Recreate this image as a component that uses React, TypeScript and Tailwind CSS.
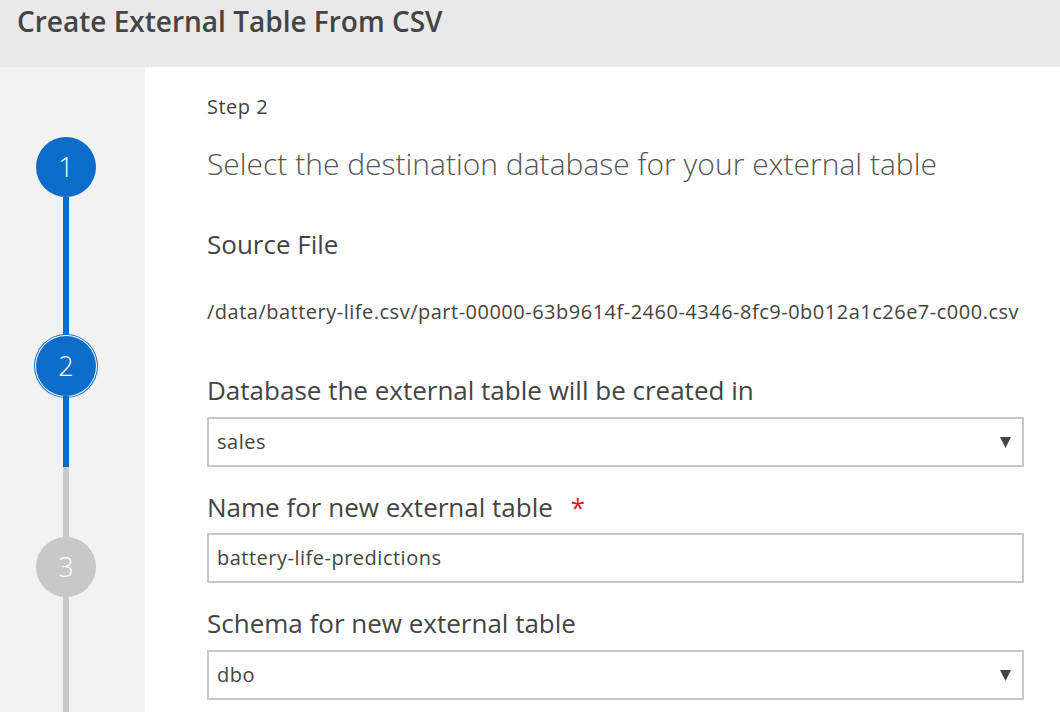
import type { ReactNode } from "react";

const font = { fontFamily: '"Open Sans", "Noto Sans", "Liberation Sans", sans-serif' };

function Arrow() {
    return (
        <svg width="11" height="11" viewBox="0 0 11 11" className="shrink-0">
            <polygon points="0,0 11,0 5.5,11" fill="#444" />
        </svg>
    );
}

type BoxProps = {
    value: string;
    select?: boolean;
};

function Box({ value, select }: BoxProps) {
    return (
        <div className="h-[50px] border-2 border-[#c8c8c8] bg-white flex items-center justify-between pl-[8px] pr-[11px]">
            <span className="text-[20px] tracking-[0.5px] text-[#444]">{value}</span>
            {select && <Arrow />}
        </div>
    );
}

function Label({ children, className }: { children: ReactNode; className: string }) {
    return <div className={`text-[26px] leading-[32px] text-[#444] ${className}`}>{children}</div>;
}

function Circle({ n, active, ring }: { n: number; active: boolean; ring?: boolean }) {
    return (
        <div
            className={`w-[60px] h-[60px] shrink-0 rounded-full flex items-center justify-center text-white text-[27px] font-light ${
                active ? "bg-[#0b6cc9]" : "bg-[#c8c8c8]"
            } ${ring ? "shadow-[0_0_0_1px_#fff,0_0_0_2px_#0b6cc9]" : ""}`}
        >
            {n}
        </div>
    );
}

export default function App() {
    return (
        <div className="w-[1060px] h-[712px] overflow-hidden flex flex-col bg-white" style={font}>
            <div className="h-[67px] shrink-0 bg-[#e9e9e9] px-[17px] pt-[2px]">
                <h1 className="text-[28px] leading-[38px] font-semibold text-[#444]">Create External Table From CSV</h1>
            </div>
            <div className="flex flex-1 min-h-0">
                <div className="w-[145px] shrink-0 bg-[#f2f2f2] flex flex-col items-center pt-[70px] pr-[13px]">
                    <Circle n={1} active />
                    <div className="w-[6px] h-[139px] bg-[#0b6cc9]" />
                    <Circle n={2} active ring />
                    <div className="w-[6px] h-[71px] bg-[#0b6cc9]" />
                    <div className="w-[6px] h-[70px] bg-[#c8c8c8]" />
                    <Circle n={3} active={false} />
                    <div className="w-[6px] flex-1 bg-[#c8c8c8]" />
                </div>
                <div className="flex-1 pl-[62px] pr-[36px]">
                    <div className="mt-[28px] text-[20px] tracking-[0.5px] leading-[24px] text-[#444]">Step 2</div>
                    <div className="mt-[25px] text-[30px] leading-[40px] font-light text-[#555]">
                        Select the destination database for your external table
                    </div>
                    <Label className="mt-[44px]">Source File</Label>
                    <div className="mt-[40px] text-[20px] tracking-[0.5px] leading-[24px] text-[#444] whitespace-nowrap">
                        /data/battery-life.csv/part-00000-63b9614f-2460-4346-8fc9-0b012a1c26e7-c000.csv
                    </div>
                    <Label className="mt-[50px]">Database the external table will be created in</Label>
                    <div className="mt-[11px]">
                        <Box value="sales" select />
                    </div>
                    <Label className="mt-[24px]">
                        Name for new external table<span className="text-[#e81123] ml-[18px]">*</span>
                    </Label>
                    <div className="mt-[10px]">
                        <Box value="battery-life-predictions" />
                    </div>
                    <Label className="mt-[24px]">Schema for new external table</Label>
                    <div className="mt-[11px]">
                        <Box value="dbo" select />
                    </div>
                </div>
            </div>
        </div>
    );
}
